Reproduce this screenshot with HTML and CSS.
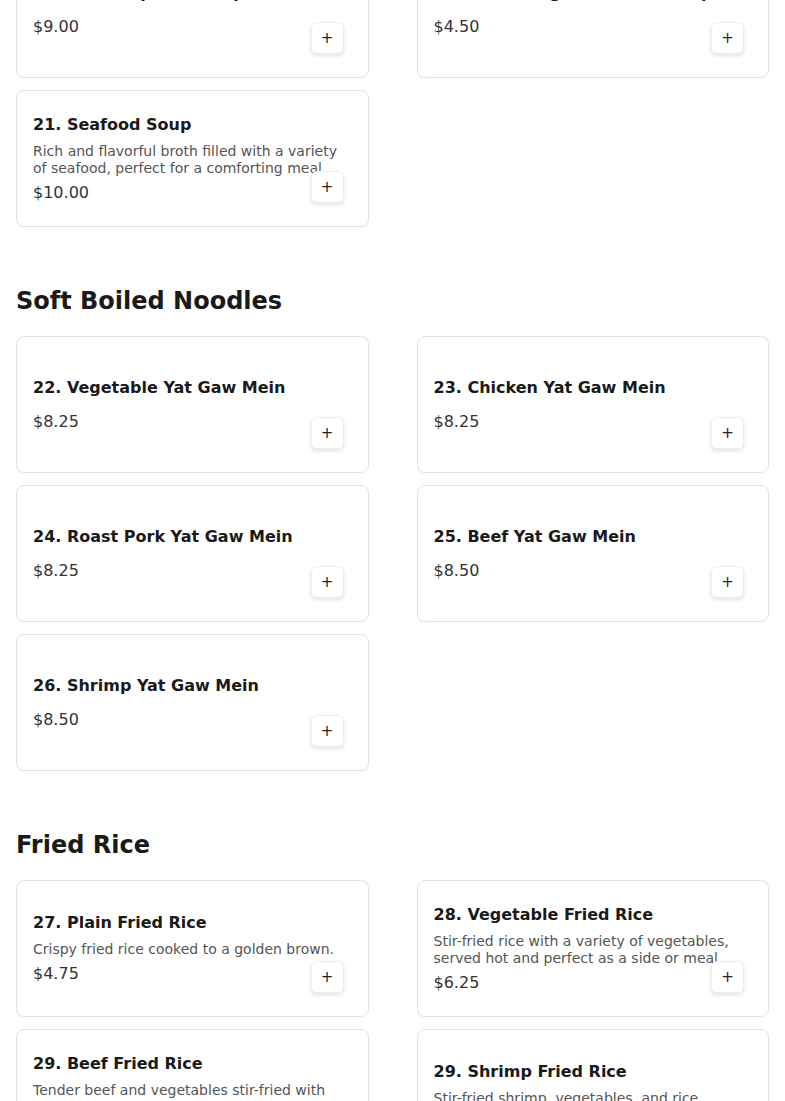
FILE: index.html
```html
<!DOCTYPE html>
<html lang="en">
<head>
<meta charset="utf-8">
<title>Menu</title>
<link rel="stylesheet" href="styles.css">
</head>
<body>
<main class="menu">
  <section class="section">
    <div class="grid">
      <div class="card">
        <div class="info">
          <div class="name">19. House Special Soup</div>
          <div class="price">$9.00</div>
        </div>
        <button class="add" aria-label="Add">+</button>
      </div>
      <div class="card">
        <div class="info">
          <div class="name">20. Mixed Vegetable Tofu Soup</div>
          <div class="price">$4.50</div>
        </div>
        <button class="add" aria-label="Add">+</button>
      </div>
      <div class="card">
        <div class="info">
          <div class="name">21. Seafood Soup</div>
          <div class="desc">Rich and flavorful broth filled with a variety of seafood, perfect for a comforting meal.</div>
          <div class="price">$10.00</div>
        </div>
        <button class="add" aria-label="Add">+</button>
      </div>
    </div>
  </section>

  <section class="section">
    <h2 class="heading">Soft Boiled Noodles</h2>
    <div class="grid">
      <div class="card">
        <div class="info">
          <div class="name">22. Vegetable Yat Gaw Mein</div>
          <div class="price">$8.25</div>
        </div>
        <button class="add" aria-label="Add">+</button>
      </div>
      <div class="card">
        <div class="info">
          <div class="name">23. Chicken Yat Gaw Mein</div>
          <div class="price">$8.25</div>
        </div>
        <button class="add" aria-label="Add">+</button>
      </div>
      <div class="card">
        <div class="info">
          <div class="name">24. Roast Pork Yat Gaw Mein</div>
          <div class="price">$8.25</div>
        </div>
        <button class="add" aria-label="Add">+</button>
      </div>
      <div class="card">
        <div class="info">
          <div class="name">25. Beef Yat Gaw Mein</div>
          <div class="price">$8.50</div>
        </div>
        <button class="add" aria-label="Add">+</button>
      </div>
      <div class="card">
        <div class="info">
          <div class="name">26. Shrimp Yat Gaw Mein</div>
          <div class="price">$8.50</div>
        </div>
        <button class="add" aria-label="Add">+</button>
      </div>
    </div>
  </section>

  <section class="section">
    <h2 class="heading">Fried Rice</h2>
    <div class="grid">
      <div class="card">
        <div class="info">
          <div class="name">27. Plain Fried Rice</div>
          <div class="desc">Crispy fried rice cooked to a golden brown.</div>
          <div class="price">$4.75</div>
        </div>
        <button class="add" aria-label="Add">+</button>
      </div>
      <div class="card">
        <div class="info">
          <div class="name">28. Vegetable Fried Rice</div>
          <div class="desc">Stir-fried rice with a variety of vegetables, served hot and perfect as a side or meal.</div>
          <div class="price">$6.25</div>
        </div>
        <button class="add" aria-label="Add">+</button>
      </div>
      <div class="card">
        <div class="info">
          <div class="name">29. Beef Fried Rice</div>
          <div class="desc">Tender beef and vegetables stir-fried with rice for a hearty, satisfying dish.</div>
          <div class="price">$7.50</div>
        </div>
        <button class="add" aria-label="Add">+</button>
      </div>
      <div class="card">
        <div class="info">
          <div class="name">29. Shrimp Fried Rice</div>
          <div class="desc">Stir-fried shrimp, vegetables, and rice.</div>
          <div class="price">$7.75</div>
        </div>
        <button class="add" aria-label="Add">+</button>
      </div>
    </div>
  </section>
</main>
</body>
</html>
```

FILE: styles.css
```css
* {
  box-sizing: border-box;
}

html, body {
  margin: 0;
  padding: 0;
  background: #ffffff;
}

body {
  font-family: "DejaVu Sans", sans-serif;
  color: #1a1a1a;
  overflow: hidden;
}

.menu {
  padding: 0 16px;
  margin-top: -59px;
}

.heading {
  margin: 58px 0 19px;
  font-size: 24px;
  line-height: 32px;
  font-weight: bold;
  color: #1a1a1a;
}

.grid {
  display: grid;
  grid-template-columns: 1fr 1fr;
  column-gap: 48px;
  row-gap: 12px;
}

.card {
  position: relative;
  min-height: 137px;
  display: flex;
  align-items: center;
  padding: 16px;
  background: #ffffff;
  border: 1px solid #e3e3e3;
  border-radius: 8px;
  box-shadow: 0 1px 2px rgba(0, 0, 0, 0.03);
}

.info {
  width: 100%;
  padding-right: 8px;
}

.name {
  font-size: 16px;
  line-height: 24px;
  font-weight: bold;
  color: #1a1a1a;
  margin-bottom: 6px;
}

.desc {
  font-size: 14px;
  line-height: 17px;
  color: #555555;
  display: -webkit-box;
  -webkit-line-clamp: 2;
  -webkit-box-orient: vertical;
  overflow: hidden;
}

.price {
  margin-top: 4px;
  font-size: 16px;
  line-height: 24px;
  color: #333333;
}

.name + .price {
  margin-top: 10px;
}

.add {
  position: absolute;
  right: 24px;
  bottom: 23px;
  width: 33px;
  height: 32px;
  padding: 0;
  border: 1px solid #eeeeee;
  border-radius: 6px;
  background: #ffffff;
  box-shadow: 0 2px 4px rgba(0, 0, 0, 0.12);
  font-family: "DejaVu Sans", sans-serif;
  font-size: 15px;
  line-height: 30px;
  color: #222222;
  text-align: center;
  cursor: pointer;
}
```
